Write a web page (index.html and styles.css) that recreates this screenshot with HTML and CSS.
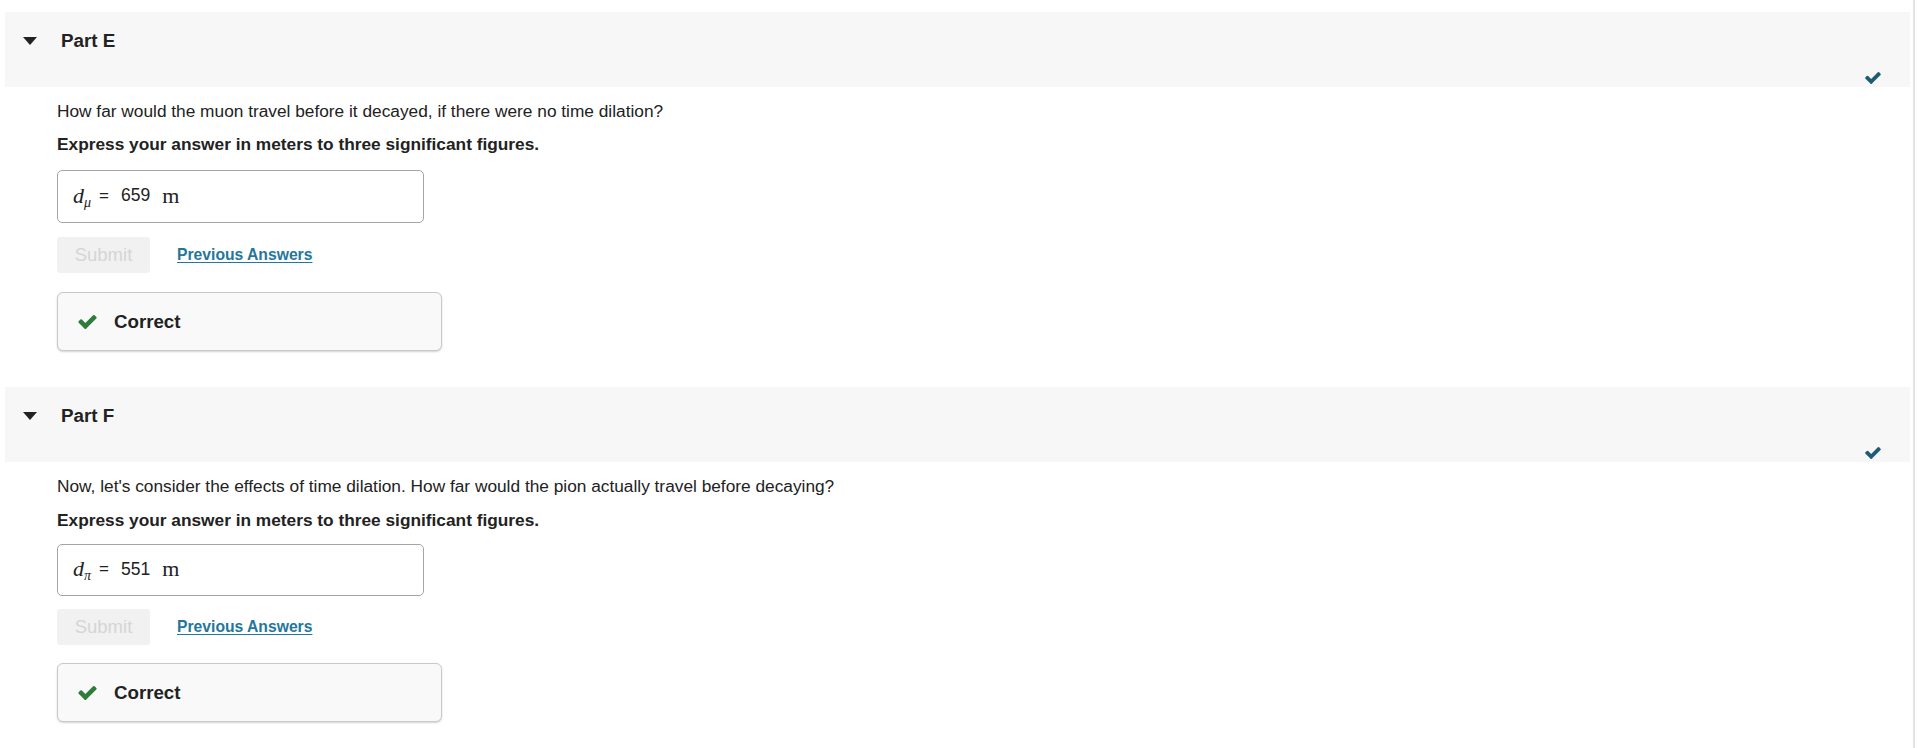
FILE: index.html
```html
<!DOCTYPE html>
<html lang="en">
<head>
<meta charset="utf-8">
<title>Parts E and F</title>
<link rel="stylesheet" href="styles.css">
</head>
<body>
<div class="page">
  <section class="part">
    <div class="part-header">
      <span class="caret"></span>
      <h2 class="part-title">Part E</h2>
      <svg class="done-check" viewBox="121 334 1550 1188" aria-hidden="true"><path d="M1671 566q0 40-28 68l-724 724-136 136q-28 28-68 28t-68-28l-136-136-362-362q-28-28-28-68t28-68l136-136q28-28 68-28t68 28l294 295 656-657q28-28 68-28t68 28l136 136q28 28 28 68z"/></svg>
    </div>
    <div class="part-body">
      <p class="question">How far would the muon travel before it decayed, if there were no time dilation?</p>
      <p class="instruction">Express your answer in meters to three significant figures.</p>
      <div class="answer-box">
        <span class="var">d<sub>μ</sub></span><span class="eq">=</span><span class="num">659</span><span class="unit">m</span>
      </div>
      <div class="actions">
        <button class="submit" disabled>Submit</button>
        <a class="prev" href="#">Previous Answers</a>
      </div>
      <div class="feedback">
        <svg class="ok-check" viewBox="121 334 1550 1188" aria-hidden="true"><path d="M1671 566q0 40-28 68l-724 724-136 136q-28 28-68 28t-68-28l-136-136-362-362q-28-28-28-68t28-68l136-136q28-28 68-28t68 28l294 295 656-657q28-28 68-28t68 28l136 136q28 28 28 68z"/></svg>
        <span class="feedback-text">Correct</span>
      </div>
    </div>
  </section>

  <section class="part part-compact">
    <div class="part-header">
      <span class="caret"></span>
      <h2 class="part-title">Part F</h2>
      <svg class="done-check" viewBox="121 334 1550 1188" aria-hidden="true"><path d="M1671 566q0 40-28 68l-724 724-136 136q-28 28-68 28t-68-28l-136-136-362-362q-28-28-28-68t28-68l136-136q28-28 68-28t68 28l294 295 656-657q28-28 68-28t68 28l136 136q28 28 28 68z"/></svg>
    </div>
    <div class="part-body">
      <p class="question">Now, let's consider the effects of time dilation. How far would the pion actually travel before decaying?</p>
      <p class="instruction">Express your answer in meters to three significant figures.</p>
      <div class="answer-box">
        <span class="var">d<sub>π</sub></span><span class="eq">=</span><span class="num">551</span><span class="unit">m</span>
      </div>
      <div class="actions">
        <button class="submit" disabled>Submit</button>
        <a class="prev" href="#">Previous Answers</a>
      </div>
      <div class="feedback">
        <svg class="ok-check" viewBox="121 334 1550 1188" aria-hidden="true"><path d="M1671 566q0 40-28 68l-724 724-136 136q-28 28-68 28t-68-28l-136-136-362-362q-28-28-28-68t28-68l136-136q28-28 68-28t68 28l294 295 656-657q28-28 68-28t68 28l136 136q28 28 28 68z"/></svg>
        <span class="feedback-text">Correct</span>
      </div>
    </div>
  </section>
</div>
</body>
</html>
```

FILE: styles.css
```css
* { box-sizing: border-box; }

html, body {
  margin: 0;
  padding: 0;
  background: #ffffff;
}

body {
  font-family: "Liberation Sans", Arial, Helvetica, sans-serif;
  color: #222222;
  overflow: hidden;
}

.page {
  width: 1915px;
  min-height: 748px;
  padding: 12px 3px 0 5px;
  border-right: 2px solid #e3e3e3;
}

.part + .part {
  margin-top: 36px;
}

.part-header {
  position: relative;
  height: 75px;
  background: #f7f7f7;
  display: flex;
  align-items: flex-start;
  padding: 19px 0 0 18px;
}

.caret {
  width: 0;
  height: 0;
  margin-top: 6px;
  border-left: 7px solid transparent;
  border-right: 7px solid transparent;
  border-top: 8px solid #222222;
}

.part-title {
  margin: 0 0 0 24px;
  font-size: 18.8px;
  line-height: 20px;
  font-weight: bold;
  color: #222222;
}

.done-check {
  position: absolute;
  right: 29px;
  bottom: 3px;
  width: 16px;
  height: 12px;
  fill: #1f5b76;
}

.part-body {
  padding-left: 52px;
}

.question {
  margin: 14px 0 0;
  font-size: 17.3px;
  line-height: 20px;
}

.instruction {
  margin: 13px 0 0;
  font-size: 17.3px;
  line-height: 20px;
  font-weight: bold;
}

.answer-box {
  margin-top: 16px;
  width: 367px;
  height: 53px;
  border: 1px solid #a5a5a5;
  border-radius: 5px;
  background: #ffffff;
  display: flex;
  align-items: center;
  padding-left: 15px;
  padding-bottom: 2px;
}

.var {
  font-family: "Liberation Serif", "Times New Roman", serif;
  font-style: italic;
  font-size: 22px;
  color: #222222;
}

.var sub {
  font-size: 14px;
  vertical-align: -4px;
  line-height: 0;
}

.eq {
  font-size: 17px;
  margin-left: 8px;
}

.num {
  font-size: 17.5px;
  margin-left: 12px;
}

.unit {
  font-family: "Liberation Serif", "Times New Roman", serif;
  font-size: 22px;
  margin-left: 12px;
}

.actions {
  margin-top: 14px;
  display: flex;
  align-items: center;
}

.submit {
  width: 93px;
  height: 36px;
  border: none;
  border-radius: 3px;
  background: #f1f1f1;
  color: #d5d5d5;
  font-family: "Liberation Sans", Arial, sans-serif;
  font-size: 18.5px;
  padding: 0;
}

.prev {
  margin-left: 27px;
  font-size: 15.7px;
  font-weight: bold;
  color: #24779c;
  text-decoration: underline;
  text-underline-offset: 2px;
}

.feedback {
  margin-top: 19px;
  width: 385px;
  height: 59px;
  border: 1px solid #c9c9c9;
  border-radius: 6px;
  background: #f9f9f9;
  box-shadow: 0 1px 2px rgba(0, 0, 0, 0.18);
  display: flex;
  align-items: center;
  padding-left: 20px;
}

.part-compact .instruction { margin-top: 14px; }
.part-compact .answer-box { margin-top: 14px; height: 52px; }
.part-compact .actions { margin-top: 13px; }
.part-compact .feedback { margin-top: 18px; }

.ok-check {
  width: 19px;
  height: 14px;
  fill: #2e7d3a;
}

.feedback-text {
  margin-left: 17px;
  font-size: 18.7px;
  font-weight: bold;
  color: #222222;
}
```
